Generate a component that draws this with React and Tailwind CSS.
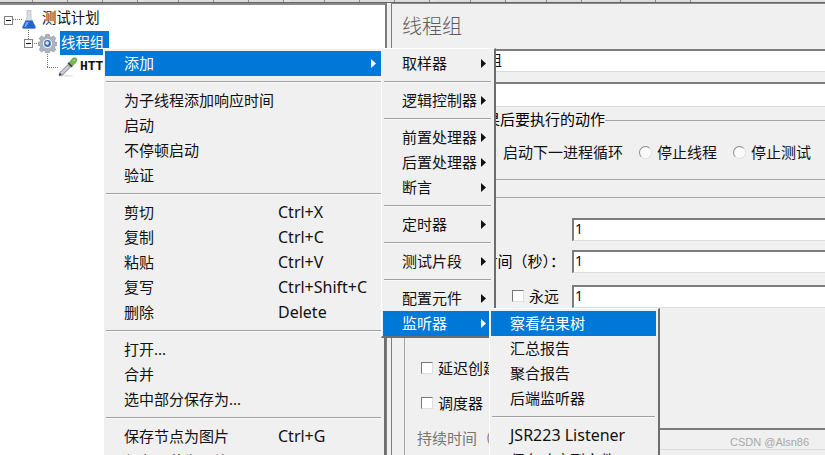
const FONT = "font-['Noto_Sans','Noto_Sans_CJK_SC',sans-serif]";

const toolbarSegments = [
  [33, 0], [35, 0], [35, 0], [35, 0],
  [35, 6], [35, 0], [35, 0], [35, 0],
  [35, 6], [35, 0], [35, 0], [35, 0],
  [35, 6], [35, 0], [35, 6], [35, 0],
  [36, 3], [35, 0], [35, 0],
];

const mainMenu = [
  { label: "添加", arrow: true, active: true },
  "sep",
  { label: "为子线程添加响应时间" },
  { label: "启动" },
  { label: "不停顿启动" },
  { label: "验证" },
  "sep",
  { label: "剪切", shortcut: "Ctrl+X" },
  { label: "复制", shortcut: "Ctrl+C" },
  { label: "粘贴", shortcut: "Ctrl+V" },
  { label: "复写", shortcut: "Ctrl+Shift+C" },
  { label: "删除", shortcut: "Delete" },
  "sep",
  { label: "打开..." },
  { label: "合并" },
  { label: "选中部分保存为..." },
  "sep",
  { label: "保存节点为图片", shortcut: "Ctrl+G" },
  { label: "保存屏幕为图片", shortcut: "Ctrl+Shift+G" },
];

const addMenu = [
  { label: "取样器", arrow: true },
  "sep",
  { label: "逻辑控制器", arrow: true },
  "sep",
  { label: "前置处理器", arrow: true },
  { label: "后置处理器", arrow: true },
  { label: "断言", arrow: true },
  "sep",
  { label: "定时器", arrow: true },
  "sep",
  { label: "测试片段", arrow: true },
  "sep",
  { label: "配置元件", arrow: true },
  { label: "监听器", arrow: true, active: true },
];

const listenerMenu = [
  { label: "察看结果树", active: true },
  { label: "汇总报告" },
  { label: "聚合报告" },
  { label: "后端监听器" },
  "sep",
  { label: "JSR223 Listener", latin: true },
  { label: "保存响应到文件" },
];

function Arrow({ active }) {
  return (
    <svg width="5" height="9" viewBox="0 0 5 9" className="ml-auto shrink-0">
      <polygon points="0,0 5,4.5 0,9" fill={active ? "#ffffff" : "#111111"} />
    </svg>
  );
}

function Menu({ items, className, labelWidth }) {
  return (
    <div className={`absolute z-10 bg-[#f0f0f0] border-l border-t border-r-2 border-b-2 border-l-[#fdfdfd] border-t-[#fdfdfd] border-r-[#6e6e6e] border-b-[#6e6e6e] pt-[2px] pl-[1px] pr-[2px] ${className}`}>
      {items.map((item, i) =>
        item === "sep" ? (
          <div key={i} className="h-[12px] py-[5px] px-[1px]">
            <div className="h-[2px] bg-[#a0a0a0] border-b border-[#fafafa]" />
          </div>
        ) : (
          <div
            key={i}
            className={`h-[25px] flex items-center pl-[19px] pr-[6px] text-[15px] leading-[25px] whitespace-nowrap ${
              item.active ? "bg-[#0078d7] text-white" : "text-[#111111]"
            }`}
          >
            <span
              style={labelWidth ? { width: labelWidth } : undefined}
              className={item.latin ? "shrink-0 text-[16px]" : "shrink-0"}
            >
              {item.label}
            </span>
            {item.shortcut && <span className="text-[16px]">{item.shortcut}</span>}
            {item.arrow && <Arrow active={item.active} />}
          </div>
        )
      )}
    </div>
  );
}

function TreeLines() {
  return (
    <svg width="60" height="80" viewBox="0 0 60 80" className="absolute left-0 top-0" fill="none">
      <g stroke="#777777" strokeDasharray="1 1">
        <path d="M13 19.5H22" />
        <path d="M28.5 28V39" />
        <path d="M32 43.5H38" />
        <path d="M47.5 52V67" />
        <path d="M47 67.5H58" />
      </g>
      <rect x="4.5" y="16.5" width="8" height="8" fill="#ffffff" stroke="#808080" />
      <path d="M6 20.5H11" stroke="#111111" />
      <rect x="24.5" y="39.5" width="8" height="8" fill="#ffffff" stroke="#808080" />
      <path d="M26 43.5H31" stroke="#111111" />
    </svg>
  );
}

function FlaskIcon() {
  return (
    <svg width="14" height="19" viewBox="0 0 14 19" className="shrink-0">
      <path d="M5 0.5 L9 0.5 L9 8 L13.5 17 Q14 18.5 12 18.5 L2 18.5 Q0 18.5 0.5 17 L5 8Z" fill="#d9dde6" stroke="#a8adb8" strokeWidth="0.6" />
      <path d="M3.6 10.5 L10.4 10.5 L13.5 17 Q14 18.5 12 18.5 L2 18.5 Q0 18.5 0.5 17Z" fill="#2563c9" />
      <path d="M4 12 L7 12 L4 17 L2.4 17Z" fill="#6ea4ea" />
    </svg>
  );
}

function GearIcon() {
  return (
    <svg width="19" height="19" viewBox="0 0 20 20" className="shrink-0">
      <g fill="#aeb4bf" stroke="#7f8691" strokeWidth="0.6">
        <path d="M8.2 0.5h3.6l0.5 2.8 1.6 0.7 2.4-1.6 2.5 2.5-1.6 2.4 0.7 1.6 2.8 0.5v3.2l-2.8 0.5-0.7 1.6 1.6 2.4-2.5 2.5-2.4-1.6-1.6 0.7-0.5 2.3h-3.6l-0.5-2.3-1.6-0.7-2.4 1.6-2.5-2.5 1.6-2.4-0.7-1.6-2.3-0.5v-3.2l2.3-0.5 0.7-1.6-1.6-2.4 2.5-2.5 2.4 1.6 1.6-0.7z" transform="translate(0 -0.3) scale(1 0.98)" />
      </g>
      <circle cx="10" cy="10" r="5.4" fill="#eef1f5" stroke="#8a909a" strokeWidth="0.6" />
      <circle cx="10" cy="10" r="3.6" fill="#3f6fb5" />
      <circle cx="9.6" cy="9.6" r="1.9" fill="#dbe7f7" />
    </svg>
  );
}

function DropperIcon() {
  return (
    <svg width="20" height="20" viewBox="0 0 20 20" className="shrink-0">
      <path d="M1 18 Q8 17 15 18.5 L15 19.5 L1 19.5Z" fill="#e4e4e4" />
      <path d="M1 18.5 L2 15.5 L10 7.5 L12.5 10 L4.5 18Z" fill="#c9ccd2" stroke="#555a63" strokeWidth="0.7" />
      <path d="M1 18.5 L2 16 L3.5 17.5Z" fill="#222222" />
      <path d="M9.5 6.5 L13.5 10.5 L15 9 L11 5Z" fill="#3f4a3a" />
      <path d="M11.5 5 L15 1 Q17.5 0 19 2 Q19.5 4 15 8.5Z" fill="#74b84a" stroke="#4e8a30" strokeWidth="0.5" />
      <path d="M14 4.5 L16.5 2.2 L17.5 3Z" fill="#c0e6a2" />
    </svg>
  );
}

function TextInput({ value, className, disabled }) {
  return (
    <div className={`flex-1 border-t-2 border-l-2 border-t-[#7c7c7c] border-l-[#7c7c7c] border-b border-b-[#dcdcdc] pl-[1px] pb-[2px] flex items-center text-[14px] text-[#1b0b2e] ${disabled ? "bg-[#f0f0f0]" : "bg-white"} ${className}`}>
      {value}
    </div>
  );
}

function Radio({ label }) {
  return (
    <div className="flex items-center gap-[5px]">
      <span className="w-[13px] h-[13px] rounded-full border border-[#8a8a8a] border-b-[#e0e0e0] border-r-[#e0e0e0] bg-[#fbfbfb]" />
      <span className="text-[#111111]">{label}</span>
    </div>
  );
}

function Checkbox({ label }) {
  return (
    <div className="flex items-center gap-[5px]">
      <span className="w-[12px] h-[12px] bg-white border border-[#777777] border-b-[#dddddd] border-r-[#dddddd]" />
      <span className="text-[#111111]">{label}</span>
    </div>
  );
}

export default function App() {
  return (
    <div className={`relative w-[825px] h-[455px] overflow-hidden bg-[#f0f0f0] text-[15px] leading-[20px] ${FONT}`}>
      {/* Toolbar bottom edge */}
      <div className="flex h-[3px] border-b border-[#666666] bg-[#e2e2e2]">
        {toolbarSegments.map(([w, ml], i) => (
          <div
            key={i}
            style={{ width: w, marginLeft: ml }}
            className="h-[2px] shrink-0 border-r border-[#8a8a8a] bg-[#dcdcdc]"
          />
        ))}
      </div>

      <div className="flex h-[452px]">
        {/* Tree */}
        <div className="relative w-[387px] shrink-0 bg-white border-t-2 border-t-[#8a8a8a] border-r-2 border-r-[#7c7c7c] pt-[2px]">
          <div className="absolute left-0 top-[-5px] w-[60px] h-[80px]">
            <TreeLines />
          </div>
          <div className="relative h-[24px] flex items-center pl-[22px] gap-[6px] text-[14.4px] text-[#111111]">
            <FlaskIcon />
            <span className="pb-[2px]">测试计划</span>
          </div>
          <div className="relative h-[24px] flex items-center pl-[38px] text-[14.4px]">
            <GearIcon />
            <span className="ml-[3px] h-[24px] w-[49px] pl-[1px] leading-[23px] bg-[#0078d7] text-white">线程组</span>
          </div>
          <div className="relative h-[24px] flex items-center pl-[58px]">
            <DropperIcon />
            <span className="ml-[2px] font-['Liberation_Mono',monospace] text-[13px] font-bold text-[#111111]">HTTP请求</span>
          </div>
        </div>

        {/* Form */}
        <div className="ml-[4px] flex-1 min-w-0 border-l border-t border-l-[#7c7c7c] border-t-[#8a8a8a] pl-[10px]">
          <div className="h-[45px] pt-[10px] text-[20px] leading-[26px] text-[#5c5c5c] font-light">线程组</div>

          <div className="flex h-[23px] items-center">
            <span className="w-[52px] shrink-0">名称：</span>
            <TextInput value="线程组" className="h-[23px] text-[15px] text-[#111111] pl-[1px]" />
          </div>
          <div className="flex h-[25px] items-center mt-[10px]">
            <span className="w-[52px] shrink-0">注释：</span>
            <TextInput className="h-[25px]" />
          </div>

          <fieldset className="mt-[3px] ml-[2px] border-l border-t border-b border-[#a6a6a6] pb-[16px]">
            <legend className="ml-[4px] pl-[1px] h-[20px] leading-[18px] text-[15px]">在取样器结果后要执行的动作</legend>
            <div className="mt-[13px] ml-[16px] flex items-center gap-[16px] h-[20px] pb-[2px]">
              <Radio label="继续" />
              <Radio label="启动下一进程循环" />
              <Radio label="停止线程" />
              <Radio label="停止测试" />
            </div>
          </fieldset>

          <fieldset className="mt-[7px] ml-[2px] border-l border-t border-[#a6a6a6] h-[300px]">
            <legend className="ml-[4px] h-[20px]">线程属性</legend>
            <div className="mt-[11px] flex h-[23px] items-center">
              <span className="w-[167px] shrink-0 pl-[7px]">线程数：</span>
              <TextInput value="1" className="h-[23px]" />
            </div>
            <div className="mt-[9px] flex h-[23px] items-center">
              <span className="w-[167px] shrink-0 pr-[7px] pb-[2px] text-right whitespace-nowrap">Ramp-Up时间（秒）：</span>
              <TextInput value="1" className="h-[23px]" />
            </div>
            <div className="mt-[12px] flex h-[23px] items-center">
              <span className="w-[107px] shrink-0 pl-[7px]">循环次数</span>
              <div className="w-[60px] shrink-0 pb-[2px]">
                <Checkbox label="永远" />
              </div>
              <TextInput value="1" className="h-[23px]" />
            </div>
            <div className="mt-[50px] ml-[16px] h-[20px] flex items-center">
              <Checkbox label="延迟创建线程直到需要" />
            </div>
            <div className="mt-[16px] ml-[16px] h-[20px] flex items-center pb-[2px]">
              <Checkbox label="调度器" />
            </div>
            <div className="mt-[14px] flex h-[22px] items-center">
              <span className="w-[167px] shrink-0 pl-[12px] pb-[2px] text-[#777777]">持续时间（秒）</span>
              <TextInput disabled className="h-[22px]" />
            </div>
          </fieldset>
        </div>
      </div>

      {/* Context menus */}
      <Menu items={mainMenu} labelWidth={154} className="left-[103px] top-[48px] w-[283px]" />
      <Menu items={addMenu} className="left-[381px] top-[48px] w-[115px]" />
      <Menu items={listenerMenu} className="left-[489px] top-[308px] w-[171px] h-[160px]" />

      <div className="absolute z-20 left-[730px] top-[434px] text-[11px] leading-[16px] text-[#a8a8a8] font-['Liberation_Sans',sans-serif]">
        CSDN @Alsn86
      </div>
    </div>
  );
}
